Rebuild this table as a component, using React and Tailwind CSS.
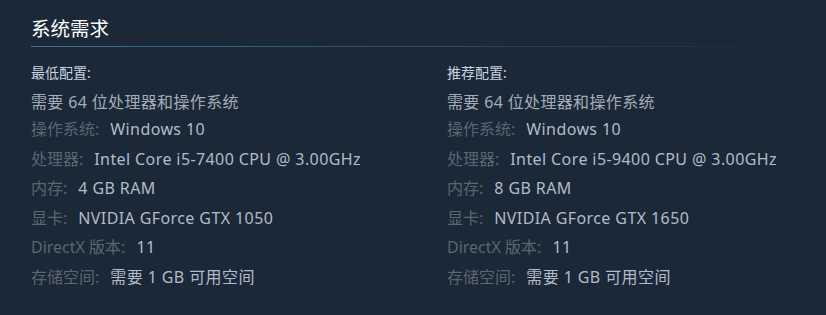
import React from 'react';

const minimum = [
  ['操作系统:', 'Windows 10'],
  ['处理器:', 'Intel Core i5-7400 CPU @ 3.00GHz'],
  ['内存:', '4 GB RAM'],
  ['显卡:', 'NVIDIA GForce GTX 1050'],
  ['DirectX 版本:', '11'],
  ['存储空间:', '需要 1 GB 可用空间'],
];

const recommended = [
  ['操作系统:', 'Windows 10'],
  ['处理器:', 'Intel Core i5-9400 CPU @ 3.00GHz'],
  ['内存:', '8 GB RAM'],
  ['显卡:', 'NVIDIA GForce GTX 1650'],
  ['DirectX 版本:', '11'],
  ['存储空间:', '需要 1 GB 可用空间'],
];

function ReqColumn({ title, rows }) {
  return (
    <div className="w-[416px] shrink-0">
      <div className="text-[14px] leading-[20px] text-[#c6d4df]">{title}</div>
      <div className="mt-[5px] text-[16px] leading-[29.5px] tracking-[0.35px] text-[#a3adb7]">
        需要 64 位处理器和操作系统
      </div>
      <ul className="-mt-[2.4px]">
        {rows.map(([label, value], i) => (
          <li key={i} className="text-[16px] leading-[29.5px] whitespace-nowrap">
            <span className="text-[#5a6570]">{label}</span>
            <span className="ml-[11px] tracking-[0.4px] text-[#b2bcc6]">{value}</span>
          </li>
        ))}
      </ul>
    </div>
  );
}

export default function App() {
  return (
    <div
      className="w-[826px] h-[315px] bg-[#1b2838] pt-[15px] pl-[31px]"
      style={{ fontFamily: '"Noto Sans", "Noto Sans CJK SC", sans-serif' }}
    >
      <div className="w-[770px]">
        <h2 className="text-[19.5px] leading-[28px] text-white pb-[3px]">系统需求</h2>
        <div className="h-px bg-gradient-to-r from-[#3d7397] to-[#1b2838]" />
      </div>
      <div className="flex mt-[16px]">
        <ReqColumn title="最低配置:" rows={minimum} />
        <ReqColumn title="推荐配置:" rows={recommended} />
      </div>
    </div>
  );
}
